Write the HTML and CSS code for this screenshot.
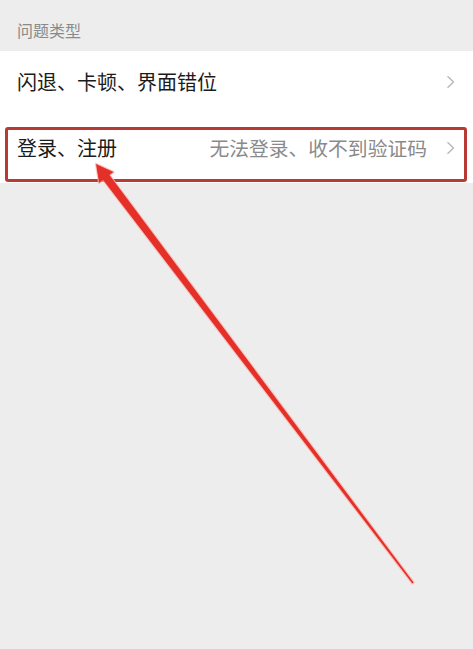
FILE: index.html
```html
<!DOCTYPE html>
<html lang="zh-CN">
<head>
<meta charset="utf-8">
<link rel="stylesheet" href="styles.css">
</head>
<body>
<div class="page">
  <div class="section-title">问题类型</div>
  <div class="list">
    <div class="row row-first">
      <span class="label">闪退、卡顿、界面错位</span>
      <span class="right">
        <svg class="chev" width="9" height="14" viewBox="0 0 9 14"><path d="M1.5 1.2 L7.5 7 L1.5 12.8" fill="none" stroke="#b5b5b5" stroke-width="1.3"/></svg>
      </span>
    </div>
    <div class="row row-second">
      <span class="label">登录、注册</span>
      <span class="right">
        <span class="sub">无法登录、收不到验证码</span>
        <svg class="chev" width="9" height="14" viewBox="0 0 9 14"><path d="M1.5 1.2 L7.5 7 L1.5 12.8" fill="none" stroke="#b5b5b5" stroke-width="1.3"/></svg>
      </span>
    </div>
  </div>
  <div class="highlight"></div>
  <svg class="arrow" width="473" height="649" viewBox="0 0 473 649">
    <polygon points="96,164 113.5,172.1 109.5,175.1 413.6,582.5 412.4,583.5 103.1,179.9 99.1,182.9" fill="#f7b7ae" stroke="#f7b7ae" stroke-width="2.2" stroke-linejoin="round" opacity="0.8"/>
    <polygon points="96,164 113.5,172.1 109.5,175.1 413.6,582.5 412.4,583.5 103.1,179.9 99.1,182.9" fill="#e5302a"/>
  </svg>
</div>
</body>
</html>
```

FILE: styles.css
```css
html, body {
  margin: 0;
  padding: 0;
  background: #ededed;
}
.page {
  position: relative;
  width: 473px;
  height: 649px;
  overflow: hidden;
  font-family: "Noto Sans CJK SC", "Noto Sans", sans-serif;
}
.section-title {
  height: 51px;
  box-sizing: border-box;
  padding: 18px 0 0 17px;
  font-size: 16px;
  line-height: 24px;
  color: #8a8a8a;
}
.list {
  background: #ffffff;
}
.row {
  display: flex;
  align-items: center;
  justify-content: space-between;
  padding: 0 18px 0 17px;
  font-size: 20px;
  color: #1b1b1b;
}
.row-first {
  height: 62px;
}
.row-second {
  height: 70px;
}
.label {
  line-height: 28px;
}
.right {
  display: flex;
  align-items: center;
  gap: 19px;
}
.sub {
  color: #8a8a8a;
  font-size: 19.8px;
  line-height: 28px;
}
.chev {
  display: block;
}
.highlight {
  position: absolute;
  left: 5px;
  top: 127px;
  width: 456px;
  height: 49px;
  border: 3px solid #b73a35;
  border-radius: 3px;
}
.arrow {
  position: absolute;
  left: 0;
  top: 0;
}
```
